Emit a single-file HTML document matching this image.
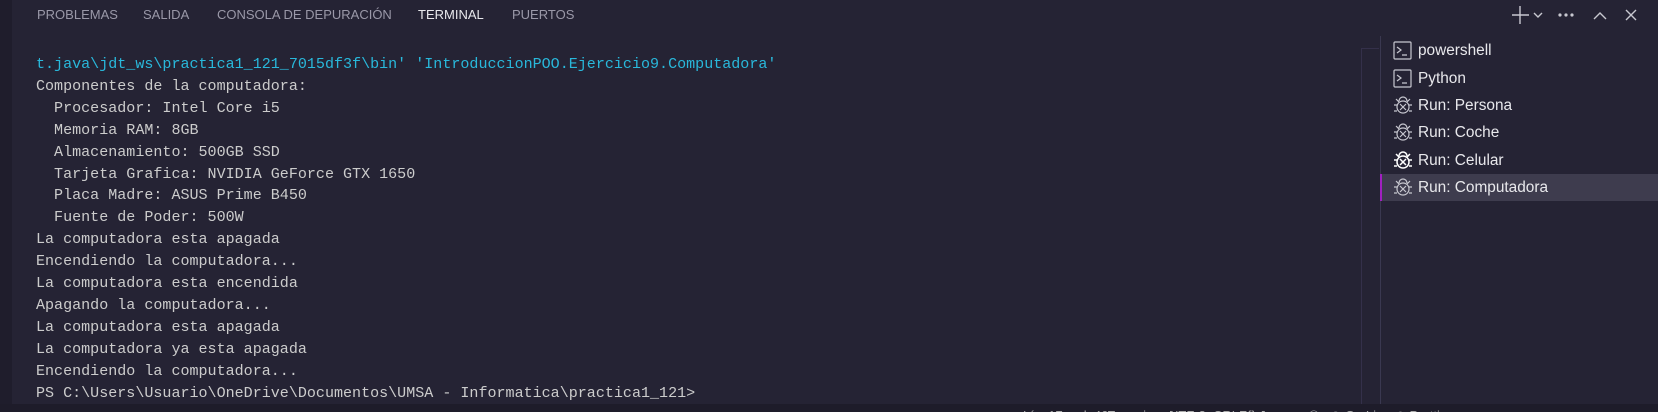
<!DOCTYPE html>
<html><head><meta charset="utf-8"><style>
*{margin:0;padding:0;box-sizing:border-box}
body{width:1658px;height:412px;overflow:hidden;background:#252334;font-family:"Liberation Sans",sans-serif;position:relative}
.strip{position:absolute;left:0;top:0;width:12px;height:404px;background:#1f1d2c}
.tabs{position:absolute;top:7px;left:0;font-size:13px;color:#9a98a8;white-space:nowrap}
.tabs span{position:absolute;top:0}
.term{position:absolute;left:36px;top:54px;font-family:"Liberation Mono",monospace;font-size:15.05px;line-height:21.9px;color:#cccccc;white-space:pre}
.cy{color:#29b8db}
.side{position:absolute;left:1380px;top:36px;width:278px;height:368px;border-left:1px solid #3a3850}
.item{position:absolute;left:0;width:278px;height:27px;font-size:15.4px;color:#e8e8ec;line-height:27px;padding-left:37px}
.item svg{position:absolute;left:12px;top:4px}
.sel{background:#3e3c4e;border-left:2px solid #a020c0}
.status{position:absolute;left:0;top:404px;width:1658px;height:8px;background:#1e1c2a;color:#aaa;font-size:13px;overflow:hidden}
.status span{position:absolute;top:4px;white-space:nowrap}
</style></head><body>
<div class="strip"></div>
<div style="position:absolute;left:1361px;top:48px;width:1px;height:356px;background:#34304a"></div>
<div style="position:absolute;left:1361px;top:48px;width:18px;height:1px;background:#34304a"></div>
<div class="tabs">
<span style="left:37px">PROBLEMAS</span><span style="left:143px">SALIDA</span><span style="left:217px">CONSOLA DE DEPURACIÓN</span><span style="left:418px;color:#e8e8ec">TERMINAL</span><span style="left:512px">PUERTOS</span>
</div>
<svg style="position:absolute;left:1512px;top:5px" width="130" height="20" fill="none" stroke="#c8c8d0" stroke-width="1.4">
<path d="M8 1v18M0 10h17"/><path d="M22 8l4 4 4-4"/>
<circle cx="48" cy="10" r=".9" fill="#c8c8d0"/><circle cx="54" cy="10" r=".9" fill="#c8c8d0"/><circle cx="60" cy="10" r=".9" fill="#c8c8d0"/>
<path d="M82 14l6-6 6 6"/><path d="M114 5l10 10M124 5l-10 10"/>
</svg>
<div class="term"><span class="cy">t.java\jdt_ws\practica1_121_7015df3f\bin' 'IntroduccionPOO.Ejercicio9.Computadora'</span>
Componentes de la computadora:
  Procesador: Intel Core i5
  Memoria RAM: 8GB
  Almacenamiento: 500GB SSD
  Tarjeta Grafica: NVIDIA GeForce GTX 1650
  Placa Madre: ASUS Prime B450
  Fuente de Poder: 500W
La computadora esta apagada
Encendiendo la computadora...
La computadora esta encendida
Apagando la computadora...
La computadora esta apagada
La computadora ya esta apagada
Encendiendo la computadora...
PS C:\Users\Usuario\OneDrive\Documentos\UMSA - Informatica\practica1_121></div>
<div class="side">
<div class="item" style="top:1px"><svg width="20" height="20" fill="none" stroke="#c8c8d0" stroke-width="1.2"><rect x="1" y="1" width="17" height="17" rx="1"/><path d="M4 6l4 3-4 3M9 14h5"/></svg>powershell</div>
<div class="item" style="top:29px"><svg width="20" height="20" fill="none" stroke="#c8c8d0" stroke-width="1.2"><rect x="1" y="1" width="17" height="17" rx="1"/><path d="M4 6l4 3-4 3M9 14h5"/></svg>Python</div>
<div class="item" style="top:56px"><svg width="20" height="20" fill="none" stroke="#c8c8d0" stroke-width="1.2"><path d="M6 5a4 4 0 018 0"/><rect x="4" y="5" width="12" height="12" rx="6"/><path d="M7 8l6 6M13 8l-6 6M1 9h3M16 9h3M1 15h3M16 15h3M3 3l3 3M17 3l-3 3"/></svg>Run: Persona</div>
<div class="item" style="top:83px"><svg width="20" height="20" fill="none" stroke="#c8c8d0" stroke-width="1.2"><path d="M6 5a4 4 0 018 0"/><rect x="4" y="5" width="12" height="12" rx="6"/><path d="M7 8l6 6M13 8l-6 6M1 9h3M16 9h3M1 15h3M16 15h3M3 3l3 3M17 3l-3 3"/></svg>Run: Coche</div>
<div class="item" style="top:111px"><svg width="20" height="20" fill="none" stroke="#ffffff" stroke-width="1.5"><path d="M6 5a4 4 0 018 0"/><rect x="4" y="5" width="12" height="12" rx="6"/><path d="M7 8l6 6M13 8l-6 6M1 9h3M16 9h3M1 15h3M16 15h3M3 3l3 3M17 3l-3 3"/></svg>Run: Celular</div>
<div class="item sel" style="top:138px;left:-1px;padding-left:36px"><svg style="left:11px" width="20" height="20" fill="none" stroke="#c8c8d0" stroke-width="1.2"><path d="M6 5a4 4 0 018 0"/><rect x="4" y="5" width="12" height="12" rx="6"/><path d="M7 8l6 6M13 8l-6 6M1 9h3M16 9h3M1 15h3M16 15h3M3 3l3 3M17 3l-3 3"/></svg>Run: Computadora</div>
</div>
<div class="status">
<span style="left:1023px">Lín. 17, col. 46</span><span style="left:1107px">Espacios: 4</span><span style="left:1169px">UTF-8</span><span style="left:1213px">CRLF</span><span style="left:1247px">{} Java</span><span style="left:1308px">⚇</span><span style="left:1330px">◎ Go Live</span><span style="left:1395px">⊘ Prettier</span><span style="left:1465px">♫</span>
</div>
</body></html>
